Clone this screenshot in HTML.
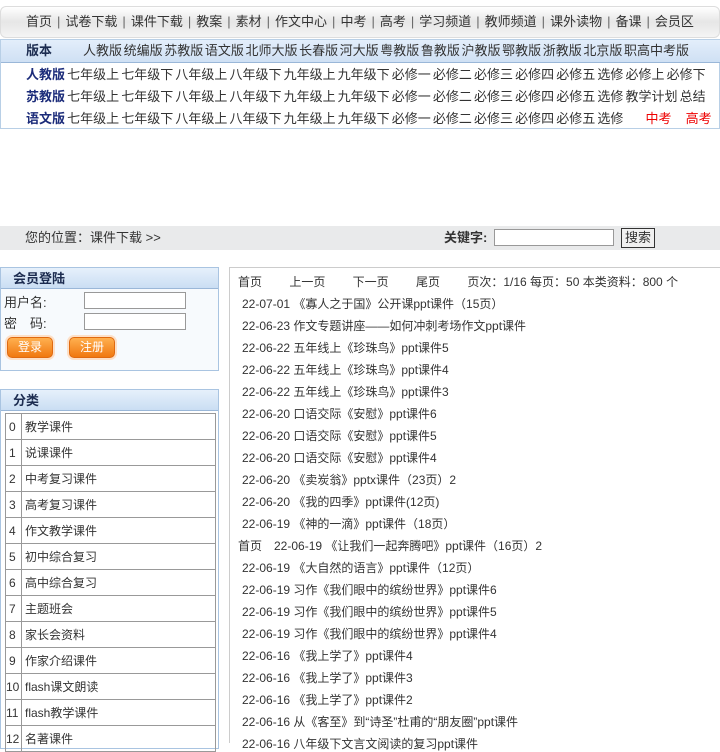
<!DOCTYPE html>
<html><head><meta charset="utf-8"><style>
*{margin:0;padding:0;box-sizing:border-box}
body{width:720px;height:743px;overflow:hidden;background:#fff;font-family:"Liberation Sans","Noto Sans CJK SC",sans-serif;font-size:12px;color:#333;position:relative}
.a{position:absolute;white-space:nowrap}
#nav{left:0;top:6px;width:720px;height:32px;border:1px solid #ddd;border-radius:6px;background:linear-gradient(#fff,#e6e6e6 50%,#f4f4f4);line-height:30px;padding-left:25px;font-size:13px;color:#333}
#nav span{color:#666;margin:0 5px}
#ver{left:0;top:39px;width:720px;height:90px;border:1px solid #b8cfe6}
#vh{left:1px;top:40px;width:719px;height:23px;background:linear-gradient(#e3eefb,#cfe0f4);border-bottom:1px solid #9ab7d8;line-height:22px;font-size:13px}
.r{left:26px;font-size:13px;line-height:22px;word-spacing:-1.5px}
.r b{color:#1c2c7a}
#bc{left:0;top:226px;width:720px;height:24px;background:#e9eaeb;line-height:24px;font-size:13px}
.box{border:1px solid #a9c4e1}
.hd{background:linear-gradient(#e6f0fb,#cadef3);border-bottom:1px solid #9ab7d8;height:21px;line-height:21px;font-weight:bold;font-size:13px;padding-left:12px;color:#1c2c50}
input{border:1px solid #999;height:17px}
.btn{position:absolute;width:46px;height:21px;border-radius:5px;background:linear-gradient(#ffb050,#f07810);border:1px solid #e06a10;color:#fff;text-align:center;line-height:19px;font-size:12px;box-shadow:0 0 0 2px #fde0c8}
table{border-collapse:collapse}
td{border:1px solid #999;height:26px;font-size:12px;padding-left:3px}
#list{left:229px;top:267px;width:491px;height:476px;border:1px solid #ccc;border-right:none;border-bottom:none}
.li{left:242px;font-size:12px}
</style></head><body>
<div class="a" id="nav">首页<span>|</span>试卷下载<span>|</span>课件下载<span>|</span>教案<span>|</span>素材<span>|</span>作文中心<span>|</span>中考<span>|</span>高考<span>|</span>学习频道<span>|</span>教师频道<span>|</span>课外读物<span>|</span>备课<span>|</span>会员区</div>
<div class="a" id="ver"></div>
<div class="a" id="vh"><b style="margin-left:25px;color:#1c2c50">版本</b><span style="margin-left:31px;word-spacing:-2px">人教版 统编版 苏教版 语文版 北师大版 长春版 河大版 粤教版 鲁教版 沪教版 鄂教版 浙教版 北京版 职高中考版</span></div>
<div class="a r" style="top:64px"><b>人教版</b> 七年级上 七年级下 八年级上 八年级下 九年级上 九年级下 必修一 必修二 必修三 必修四 必修五 选修 必修上 必修下</div>
<div class="a r" style="top:86px"><b>苏教版</b> 七年级上 七年级下 八年级上 八年级下 九年级上 九年级下 必修一 必修二 必修三 必修四 必修五 选修 教学计划 总结</div>
<div class="a r" style="top:108px"><b>语文版</b> 七年级上 七年级下 八年级上 八年级下 九年级上 九年级下 必修一 必修二 必修三 必修四 必修五 选修 <span style="color:#e00;margin-left:20px">中考</span> <span style="color:#e00;margin-left:12px">高考</span></div>
<div class="a" id="bc"><span style="margin-left:25px">您的位置：课件下载 &gt;&gt;</span><b style="position:absolute;left:444px">关键字:</b><input style="position:absolute;left:494px;top:3px;width:120px;height:17px"><span style="position:absolute;left:621px;top:2px;height:20px;line-height:18px;border:1px solid #333;background:#f0f0f0;padding:0 3px">搜索</span></div>
<div class="a box" style="left:0;top:267px;width:219px;height:104px;background:#f7fafd">
<div class="hd">会员登陆</div>
<div class="a" style="left:3px;top:24px;font-size:13px">用户名:</div>
<input class="a" style="left:83px;top:24px;width:102px">
<div class="a" style="left:3px;top:45px;font-size:13px">密　码:</div>
<input class="a" style="left:83px;top:45px;width:102px">
<div class="btn" style="left:6px;top:69px">登录</div>
<div class="btn" style="left:68px;top:69px">注册</div>
</div>
<div class="a box" style="left:0;top:389px;width:219px;height:360px">
<div class="hd">分类</div>
<table style="position:absolute;left:4px;top:23px;width:211px">
<tr><td style="width:16px">0</td><td>教学课件</td></tr>
<tr><td>1</td><td>说课课件</td></tr>
<tr><td>2</td><td>中考复习课件</td></tr>
<tr><td>3</td><td>高考复习课件</td></tr>
<tr><td>4</td><td>作文教学课件</td></tr>
<tr><td>5</td><td>初中综合复习</td></tr>
<tr><td>6</td><td>高中综合复习</td></tr>
<tr><td>7</td><td>主题班会</td></tr>
<tr><td>8</td><td>家长会资料</td></tr>
<tr><td>9</td><td>作家介绍课件</td></tr>
<tr><td style="padding:0">10</td><td>flash课文朗读</td></tr>
<tr><td style="padding:0">11</td><td>flash教学课件</td></tr>
<tr><td style="padding:0">12</td><td>名著课件</td></tr>
</table></div>
<div class="a" id="list"></div>
<div class="a" style="left:238px;top:273px;font-size:12px">首页　　 上一页　　 下一页　　 尾页　　 页次：1/16 每页：50 本类资料：800 个</div>
<div class="a li" style="top:295px">22-07-01 《寡人之于国》公开课ppt课件（15页）</div>
<div class="a li" style="top:317px">22-06-23 作文专题讲座——如何冲刺考场作文ppt课件</div>
<div class="a li" style="top:339px">22-06-22 五年线上《珍珠鸟》ppt课件5</div>
<div class="a li" style="top:361px">22-06-22 五年线上《珍珠鸟》ppt课件4</div>
<div class="a li" style="top:383px">22-06-22 五年线上《珍珠鸟》ppt课件3</div>
<div class="a li" style="top:405px">22-06-20 口语交际《安慰》ppt课件6</div>
<div class="a li" style="top:427px">22-06-20 口语交际《安慰》ppt课件5</div>
<div class="a li" style="top:449px">22-06-20 口语交际《安慰》ppt课件4</div>
<div class="a li" style="top:471px">22-06-20 《卖炭翁》pptx课件（23页）2</div>
<div class="a li" style="top:493px">22-06-20 《我的四季》ppt课件(12页)</div>
<div class="a li" style="top:515px">22-06-19 《神的一滴》ppt课件（18页）</div>
<div class="a li" style="top:537px;left:238px">首页　22-06-19 《让我们一起奔腾吧》ppt课件（16页）2</div>
<div class="a li" style="top:559px">22-06-19 《大自然的语言》ppt课件（12页）</div>
<div class="a li" style="top:581px">22-06-19 习作《我们眼中的缤纷世界》ppt课件6</div>
<div class="a li" style="top:603px">22-06-19 习作《我们眼中的缤纷世界》ppt课件5</div>
<div class="a li" style="top:625px">22-06-19 习作《我们眼中的缤纷世界》ppt课件4</div>
<div class="a li" style="top:647px">22-06-16 《我上学了》ppt课件4</div>
<div class="a li" style="top:669px">22-06-16 《我上学了》ppt课件3</div>
<div class="a li" style="top:691px">22-06-16 《我上学了》ppt课件2</div>
<div class="a li" style="top:713px">22-06-16 从《客至》到“诗圣”杜甫的“朋友圈”ppt课件</div>
<div class="a li" style="top:735px">22-06-16 八年级下文言文阅读的复习ppt课件</div>
</body></html>
